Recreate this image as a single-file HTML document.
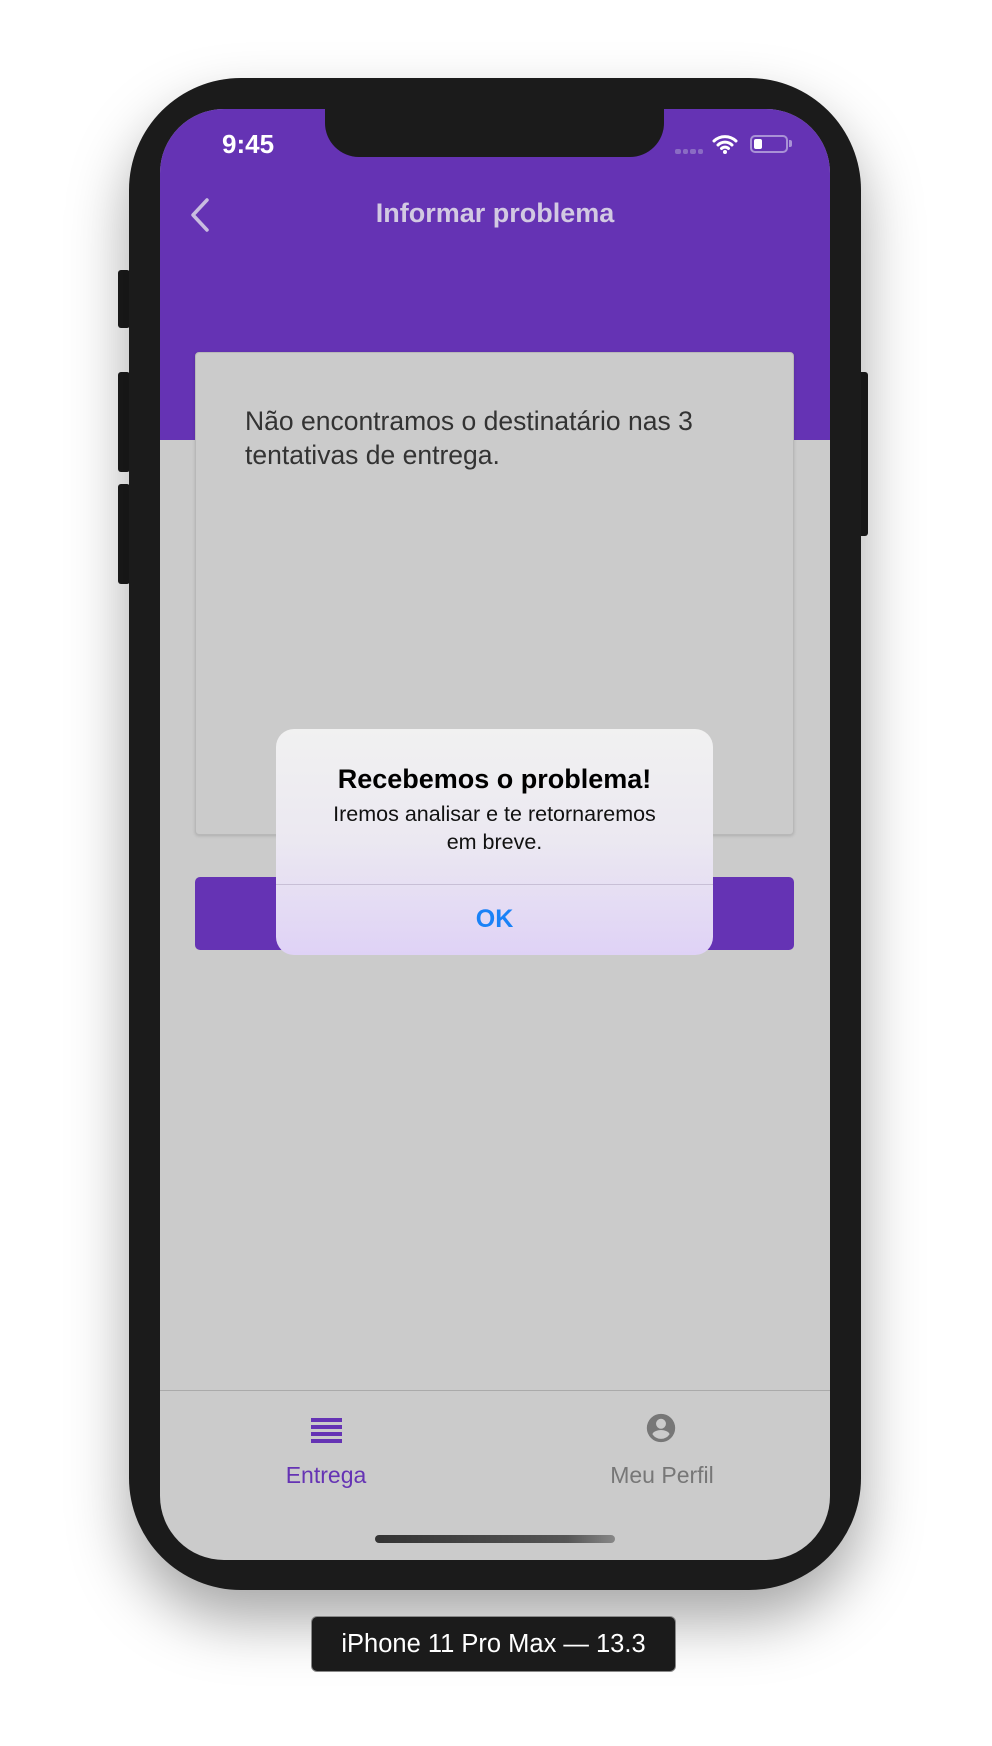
<!DOCTYPE html>
<html><head><meta charset="utf-8"><style>
*{margin:0;padding:0;box-sizing:border-box}
body{width:992px;height:1746px;background:#fff;position:relative;overflow:hidden;font-family:"Liberation Sans",sans-serif}
.abs{position:absolute}
.phone{left:129px;top:78px;width:732px;height:1512px;background:#1b1b1b;border-radius:112px;box-shadow:0 30px 60px rgba(0,0,0,.35)}
.btn{background:#1b1b1b;border-radius:3px}
.screen{left:160px;top:109px;width:670px;height:1451px;background:#cbcbcb;border-radius:64px;overflow:hidden}
.hdr{left:0;top:0;width:670px;height:331px;background:#6533b4}
.notch{left:165px;top:0;width:339px;height:48px;background:#1b1b1b;border-radius:0 0 34px 34px}
</style></head><body>
<div class="abs btn" style="left:118px;top:270px;width:12px;height:58px"></div>
<div class="abs btn" style="left:118px;top:372px;width:12px;height:100px"></div>
<div class="abs btn" style="left:118px;top:484px;width:12px;height:100px"></div>
<div class="abs btn" style="left:858px;top:372px;width:10px;height:164px"></div>
<div class="abs phone"></div>
<div class="abs screen">
  <div class="abs hdr"></div>
  <div class="abs notch"></div>
  <div class="abs" style="left:62px;top:20px;color:#fff;font-size:26px;font-weight:bold">9:45</div>
  <div class="abs" style="left:515px;top:40px;width:28px;height:5px;display:flex;gap:2px"><i style="flex:1;background:#8a6cc4;border-radius:2px"></i><i style="flex:1;background:#8a6cc4;border-radius:2px"></i><i style="flex:1;background:#8a6cc4;border-radius:2px"></i><i style="flex:1;background:#8a6cc4;border-radius:2px"></i></div>
  <svg class="abs" style="left:552px;top:25px" width="26" height="20" viewBox="0 0 26 20"><path d="M2 7a16 16 0 0 1 22 0M6 11a10 10 0 0 1 14 0M9.5 14.5a5 5 0 0 1 7 0" stroke="#fff" stroke-width="3" fill="none" stroke-linecap="round"/><circle cx="13" cy="18" r="2" fill="#fff"/></svg>
  <div class="abs" style="left:590px;top:26px;width:38px;height:18px;border:2px solid #a992d6;border-radius:5px"><div style="margin:2px;width:8px;height:10px;background:#fff;border-radius:2px"></div></div>
  <div class="abs" style="left:629px;top:31px;width:3px;height:7px;background:#a992d6;border-radius:0 2px 2px 0"></div>
  <svg class="abs" style="left:28px;top:88px" width="24" height="36" viewBox="0 0 24 36"><path d="M19 3L5 18l14 15" stroke="#c9bde0" stroke-width="3.5" fill="none" stroke-linecap="round" stroke-linejoin="round"/></svg>
  <div class="abs" style="left:0;width:670px;top:89px;text-align:center;color:#d2c9e2;font-size:27px;font-weight:bold">Informar problema</div>
  <div class="abs" style="left:35px;top:243px;width:599px;height:483px;background:#cbcbcb;border:1px solid #b8b8b8;border-radius:4px;box-shadow:0 1px 3px rgba(0,0,0,.15)"></div>
  <div class="abs" style="left:85px;top:295px;color:#333;font-size:26.5px;line-height:34px">Não encontramos o destinatário nas 3<br>tentativas de entrega.</div>
  <div class="abs" style="left:35px;top:768px;width:599px;height:73px;background:#6533b4;border-radius:5px"></div>
  <div class="abs" style="left:116px;top:620px;width:437px;height:226px;border-radius:18px;background:linear-gradient(#f1f1f1,#ebe8f1 50%,#dfd2f6);overflow:hidden">
    <div style="text-align:center;padding-top:35px;font-size:27px;font-weight:bold;color:#000">Recebemos o problema!</div>
    <div style="text-align:center;padding-top:5px;font-size:21.5px;line-height:28px;color:#111">Iremos analisar e te retornaremos<br>em breve.</div>
    <div class="abs" style="left:0;top:155px;width:437px;height:1px;background:#c8bfd6"></div>
    <div class="abs" style="left:0;top:176px;width:437px;text-align:center;color:#1a82f7;font-size:25px;font-weight:bold">OK</div>
  </div>
  <div class="abs" style="left:0;top:1281px;width:670px;height:1px;background:#aaa"></div>
  <div class="abs" style="left:151px;top:1309px;width:31px;height:25px;background:repeating-linear-gradient(#6533b4 0 4px,transparent 4px 7px)"></div>
  <svg class="abs" style="left:484px;top:1302px" width="34" height="34" viewBox="0 0 24 24"><path fill="#777" d="M12 2a10 10 0 1 0 0 20 10 10 0 0 0 0-20zm0 3.5a3.5 3.5 0 1 1 0 7 3.5 3.5 0 0 1 0-7zm0 14.2a7.5 7.5 0 0 1-6-3.2c0-2 4-3.1 6-3.1s6 1.1 6 3.1a7.5 7.5 0 0 1-6 3.2z"/></svg>
  <div class="abs" style="left:66px;width:200px;top:1353px;text-align:center;color:#6533b4;font-size:23px">Entrega</div>
  <div class="abs" style="left:402px;width:200px;top:1353px;text-align:center;color:#777;font-size:23px">Meu Perfil</div>
  <div class="abs" style="left:215px;top:1426px;width:240px;height:8px;border-radius:4px;background:linear-gradient(90deg,#333,#555 80%,#888)"></div>
</div>
<div class="abs" style="left:311px;top:1616px;width:365px;height:56px;background:#1b1b1b;border-radius:6px;border:1px solid #888;color:#fff;font-size:25.5px;text-align:center;line-height:54px">iPhone 11 Pro Max — 13.3</div>
</body></html>
